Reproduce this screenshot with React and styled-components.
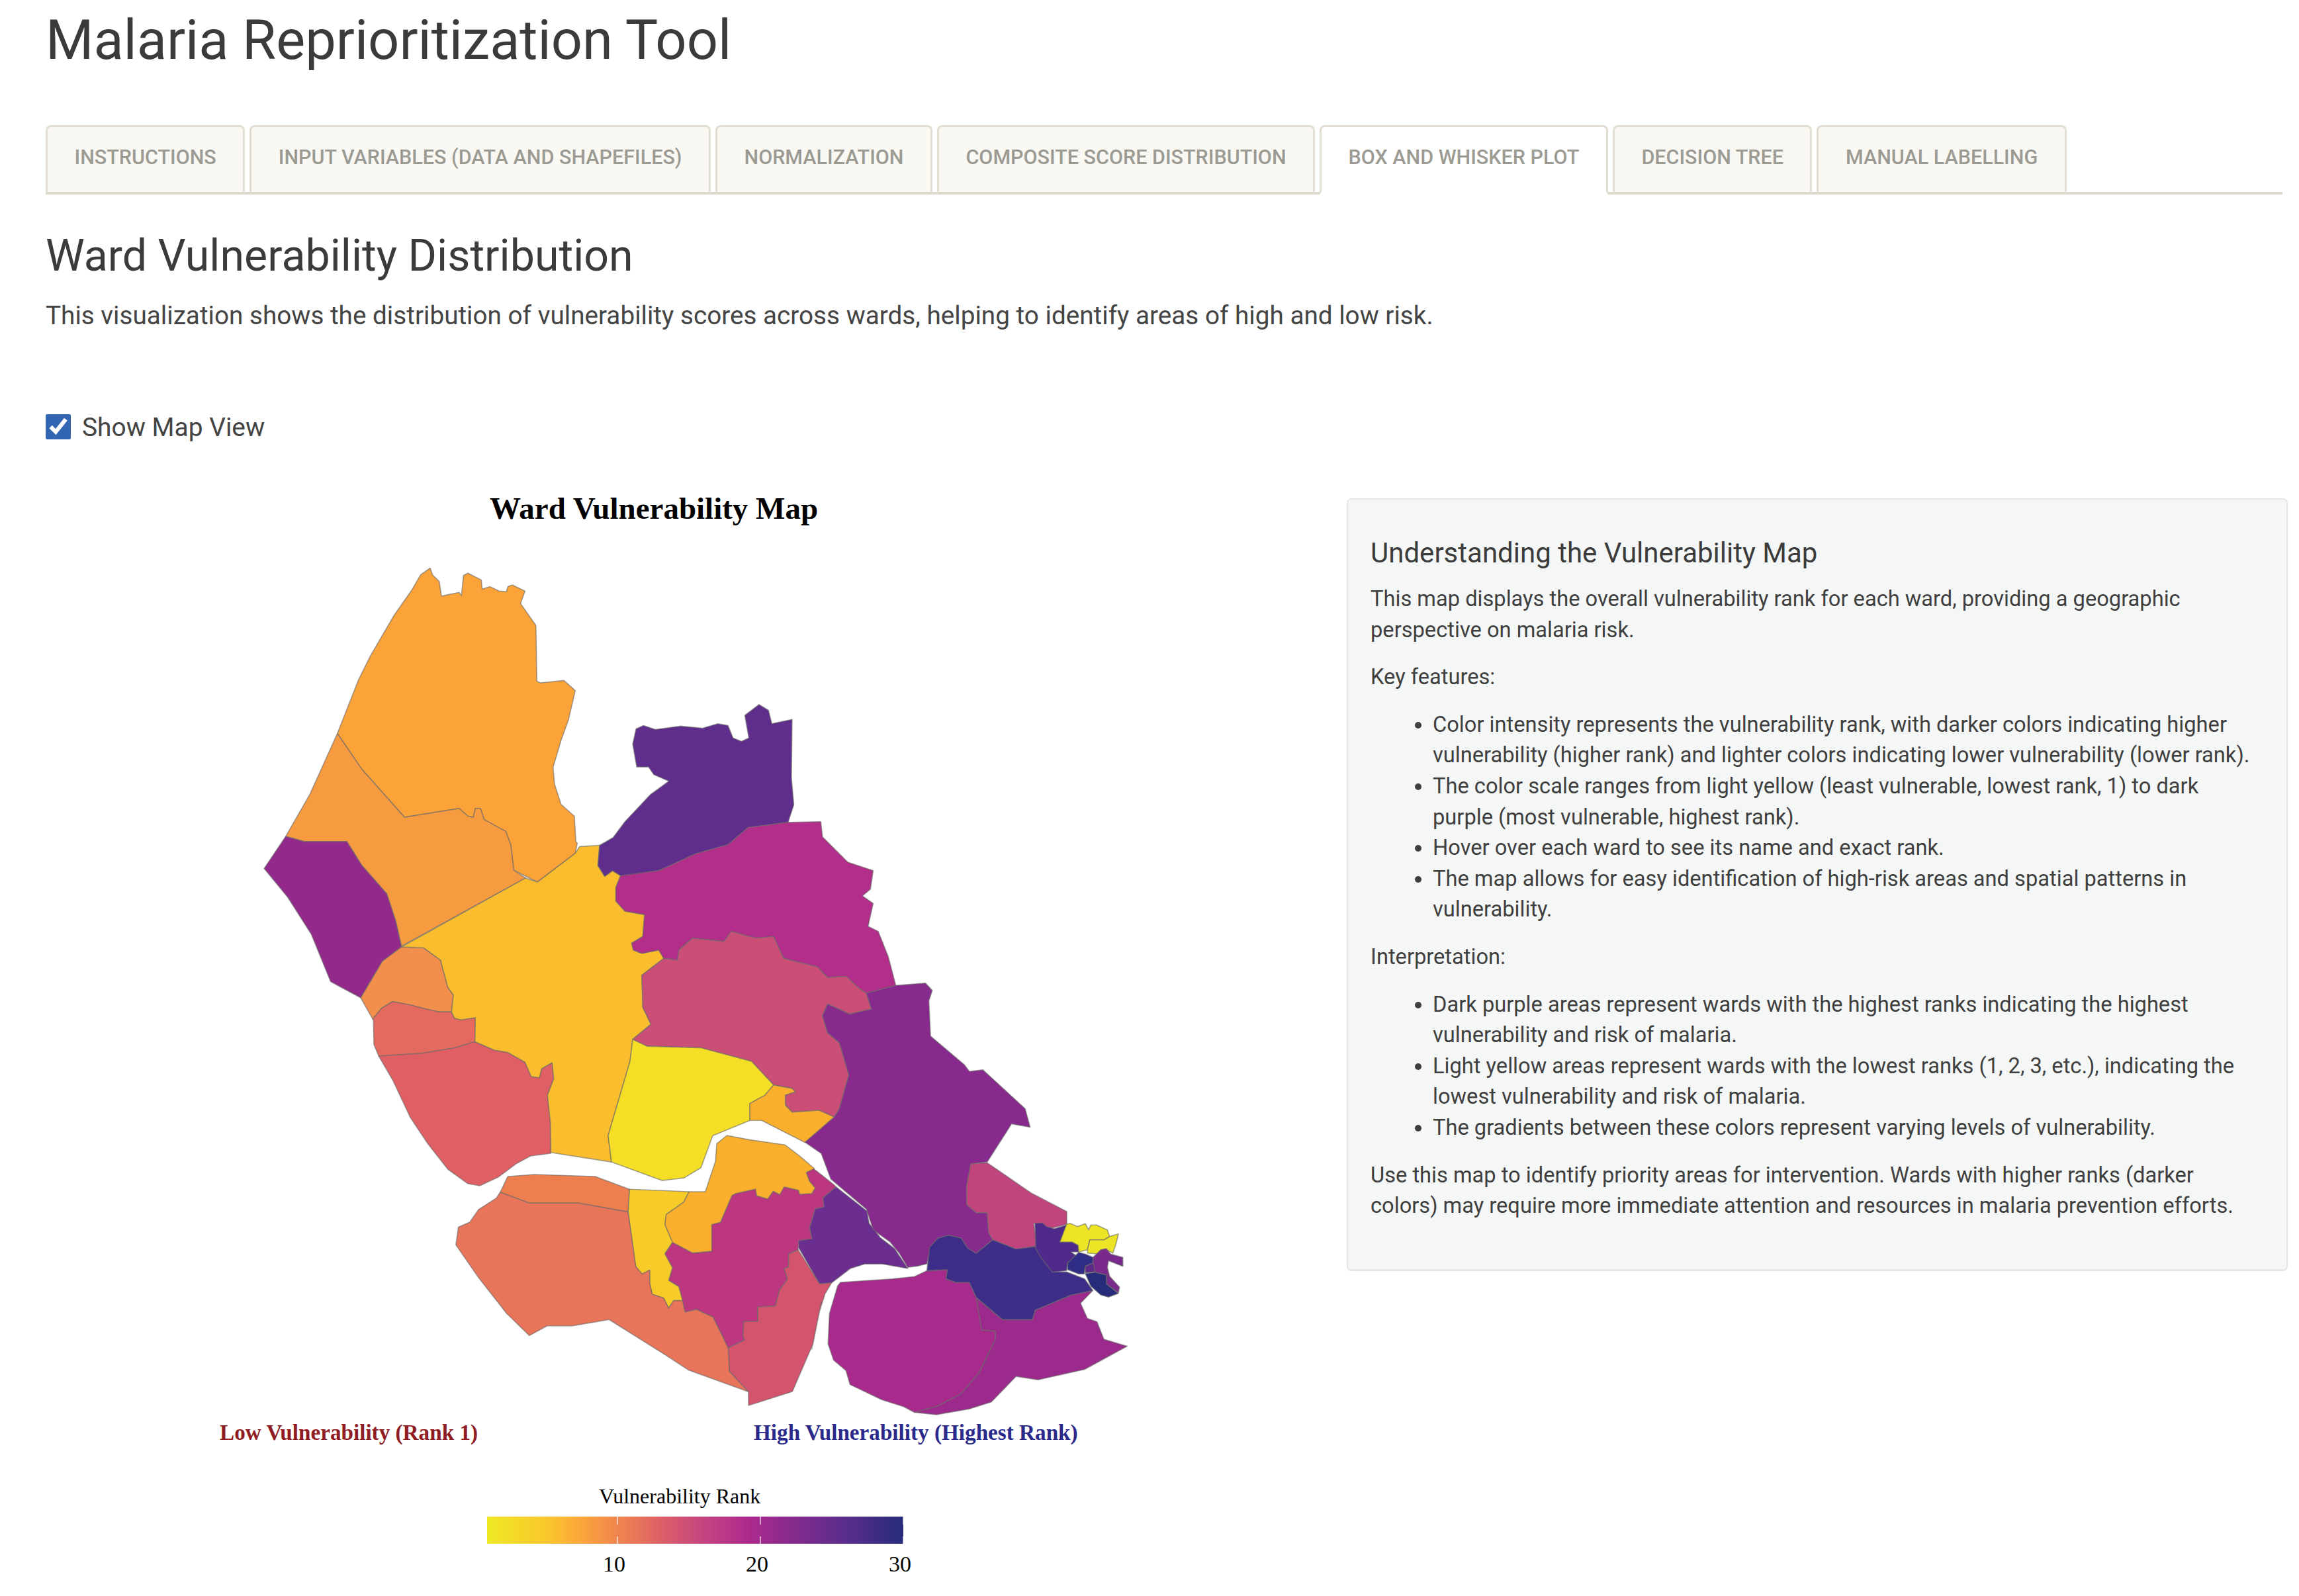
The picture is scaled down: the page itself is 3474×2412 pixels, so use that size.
import styled, { createGlobalStyle } from 'styled-components'

const GlobalStyle = createGlobalStyle`
  html, body {
    margin: 0;
    background: #fff;
  }
  body {
    font-family: Roboto, "Liberation Sans", sans-serif;
    color: #3d3d3d;
  }
`

const Page = styled.div`
  padding: 0 25px 0 69px;
  width: 3474px;
  height: 2412px;
  box-sizing: border-box;
  overflow: hidden;
`

const Title = styled.h1`
  margin: 0;
  padding-top: 13px;
  height: 189px;
  box-sizing: border-box;
  font-size: 83px;
  line-height: 96px;
  font-weight: 400;
  color: #3b3b3b;
`

const TabBar = styled.div`
  display: flex;
  gap: 7px;
  height: 105px;
  box-sizing: border-box;
  border-bottom: 4px solid #ddd8ce;
`

const Tab = styled.div`
  height: 105px;
  box-sizing: border-box;
  padding: 28px 40.5px 0;
  border: 3px solid #e2ded4;
  border-bottom: 4px solid ${props => (props.$active ? '#fff' : '#ddd8ce')};
  border-radius: 8px 8px 0 0;
  background: ${props => (props.$active ? '#fff' : '#faf8f3')};
  color: #9b9b94;
  font-size: 30.5px;
  line-height: 36px;
  font-weight: 500;
  text-transform: uppercase;
  white-space: nowrap;
`

const SectionTitle = styled.h2`
  margin: 54px 0 0;
  font-size: 66.3px;
  line-height: 76px;
  font-weight: 400;
  color: #3b3b3b;
`

const Lead = styled.p`
  margin: 30px 0 0;
  font-size: 38.7px;
  line-height: 46px;
  color: #444;
`

const CheckRow = styled.label`
  display: flex;
  align-items: center;
  gap: 17px;
  margin-top: 125px;
  height: 40px;
  font-size: 38.9px;
  color: #444;
`

const CheckBox = styled.input`
  width: 38px;
  height: 38px;
  margin: 0;
  accent-color: #3266b2;
`

const Columns = styled.div`
  display: flex;
  align-items: flex-start;
  margin: 88px -8px 0 0;
`

const MapColumn = styled.div`
  width: 1966px;
  flex: none;
  margin-top: -13px;
`

const ChartTitle = styled.div`
  width: 1838px;
  font-family: "Liberation Serif", serif;
  font-weight: 700;
  font-size: 47px;
  line-height: 56px;
  text-align: center;
  color: #000;
`

const MapSvg = styled.svg`
  display: block;
  width: 1350px;
  height: 1310px;
  margin: 36px 0 0 311px;
`

const EndLabels = styled.div`
  display: flex;
  font-family: "Liberation Serif", serif;
  font-weight: 700;
  font-size: 33.2px;
  line-height: 38px;
  margin-top: 4px;
`

const EndLabel = styled.div`
  margin-left: ${props => props.$left}px;
  width: ${props => props.$width}px;
  flex: none;
  white-space: nowrap;
  color: ${props => props.$color};
`

const Legend = styled.div`
  margin: 59px 0 0 667px;
  width: 629px;
  font-family: "Liberation Serif", serif;
  color: #000;
`

const LegendTitle = styled.div`
  padding-left: 169px;
  font-size: 32px;
  line-height: 36px;
  white-space: nowrap;
`

const ColorBar = styled.div`
  position: relative;
  margin-top: 13px;
  height: 41px;
  background: linear-gradient(90deg, #efe924 0%, #f9c82c 14%, #fba83a 22%, #ee7f52 33%, #dc5f68 42%, #c44480 52%, #ae2a8d 63%, #8b2a8d 72%, #5a2d8c 86%, #262c7a 100%);
`

const BarTick = styled.div`
  position: absolute;
  top: 0;
  bottom: 0;
  left: ${props => props.$at}px;
  width: 2px;
  background: linear-gradient(180deg, rgba(255, 255, 255, 0.55) 30%, transparent 30%, transparent 72%, rgba(255, 255, 255, 0.55) 72%);
`

const TickRow = styled.div`
  display: flex;
  margin: 12px 0 0 84px;
  font-size: 34px;
  line-height: 38px;
`

const TickLabel = styled.div`
  width: 216px;
  flex: none;
  text-align: center;
`

const InfoPanel = styled.div`
  width: 1422px;
  height: 1168px;
  flex: none;
  box-sizing: border-box;
  padding: 56px 34px 0;
  background: #f5f7f7;
  border: 2px solid #e6e8e8;
  border-bottom-width: 3px;
  border-radius: 7px;
  font-size: 32.65px;
  line-height: 46.6px;
  color: #3f3f3f;
`

const InfoTitle = styled.h4`
  margin: 0 0 21px;
  font-size: 42px;
  line-height: 50px;
  font-weight: 400;
  color: #3b3b3b;
`

const InfoText = styled.p`
  margin: 0 0 25px;
`

const InfoList = styled.ul`
  margin: 0 0 25px;
  padding-left: 94px;
`

const wards = [
  { fill: '#fba238', pts: [[3, [358,640, 430,480, 470,410, 550,290, 610,215, 640,170, 672,150, 680,170, 703,190, 710,233, 770,222, 778,232, 785,172, 800,165, 845,185, 848,212, 875,205, 905,218, 930,220, 935,205, 950,200, 993,218, 978,255, 1030,320, 1033,485, 1045,490, 1125,483, 1163,513, 1140,600, 1115,660, 1088,740, 1093,790, 1115,850, 1160,885, 1165,960, 1170,965, 1163,995, 1035,1080, 955,1045, 945,970, 928,930, 855,895, 842,862, 825,862, 818,888, 800,885, 770,862, 585,888, 440,745]]] },
  { fill: '#f79b41', pts: [[3, [358,640, 440,745, 585,888, 770,862, 800,885, 818,888, 825,862, 842,862, 855,895, 928,930, 945,970, 955,1045, 995,1068, 575,1270, 555,1195, 525,1115, 440,1030, 390,960, 245,960, 183,945, 265,820]]] },
  { fill: '#932a8b', pts: [[3, [110,1040, 183,945, 245,960, 390,960, 440,1030, 525,1115, 555,1195, 575,1272, 510,1315, 437,1423, 335,1375, 270,1235, 190,1125]]] },
  { fill: '#f28f4c', pts: [[3, [437,1423, 510,1315, 575,1272, 650,1275, 708,1312]], [10, [440,40, 470,150, 495,185, 487,262, 430,262, 375,250, 300,230, 220,215, 170,245, 130,295]]] },
  { fill: '#e4695e', pts: [[10, [130,295, 170,245, 220,215, 300,230, 375,250, 430,262, 487,262, 500,290, 530,298, 595,288, 593,397, 500,425, 350,450, 157,462, 135,410, 133,300]]] },
  { fill: '#e05f65', pts: [[10, [157,462, 350,450, 500,425, 593,397, 680,435, 740,445, 820,490, 848,555, 885,560, 895,520, 943,492, 950,565, 922,640, 935,765, 937,903, 845,915, 780,950, 700,1010, 615,1050, 560,1040, 470,975, 380,860, 300,740, 220,570]]] },
  { fill: '#f9bd2d', pts: [[3, [995,1068, 1035,1080, 1163,995, 1178,975]], [4, [110,540, 105,600, 125,632, 148,615, 172,630, 158,665, 158,705, 185,735, 243,745, 238,810, 205,830, 210,850, 235,860, 285,850, 300,875, 235,925, 238,1020, 262,1070, 208,1115, 200,1180, 135,1400, 145,1478]], [5, [555,365]], [10, [935,765, 922,640, 950,565, 943,492, 895,520, 885,560, 848,555, 820,490, 740,445, 680,435, 593,397, 595,288, 530,298, 500,290, 487,262, 495,185, 470,150, 440,40]], [3, [708,1312, 650,1275, 575,1272]]] },
  { fill: '#5f2d8c', pts: [[4, [110,540, 150,517, 185,470, 260,390, 315,350, 270,330, 255,308, 220,308, 208,240, 218,195, 240,185, 275,197, 350,187, 415,193, 460,180, 490,185, 505,222, 530,232, 552,222, 540,155, 582,123, 610,140, 620,180, 680,167, 678,340, 685,420, 668,472, 550,487, 490,538, 395,565, 285,615, 175,632, 148,615, 125,632, 105,600]]] },
  { fill: '#b32d8a', pts: [[4, [172,630, 285,615, 395,565, 490,538, 550,487, 668,472, 765,470, 770,515, 845,590, 920,615, 912,670, 888,690, 920,712, 905,780, 935,795, 965,870, 987,955, 900,978, 880,965, 840,928, 785,932, 755,900, 655,875, 625,810, 575,815, 545,808, 500,795, 478,825, 385,815, 345,850, 340,880, 300,875, 285,850, 235,860, 210,850, 205,830, 238,810, 243,745, 185,735, 158,705, 158,665]]] },
  { fill: '#cb4e76', pts: [[4, [300,875, 340,880, 345,850, 385,815, 478,825, 500,795, 545,808, 575,815, 625,810, 655,875, 755,900, 785,932, 840,928, 880,965, 900,978, 915,1025, 850,1040, 785,1010, 770,1045, 785,1095, 820,1125, 848,1220, 820,1320, 805,1345, 760,1325, 680,1330, 660,1310, 660,1280, 690,1270, 680,1260, 625,1250, 560,1180, 410,1140, 250,1135, 208,1115, 262,1070, 238,1020, 235,925]]] },
  { fill: '#f4de26', pts: [[4, [208,1115, 250,1135, 410,1140, 560,1180, 625,1250, 600,1280, 555,1305, 555,1355, 445,1400, 410,1495, 360,1525, 295,1533, 145,1478, 135,1400, 200,1180]]] },
  { fill: '#fbb02d', pts: [[4, [625,1250, 680,1260, 690,1270, 660,1280, 660,1310, 680,1330, 760,1325, 805,1345, 718,1420, 590,1355, 555,1355, 555,1305, 600,1280]]] },
  { fill: '#882a8d', pts: [[4, [900,978, 987,955, 1075,948, 1095,970, 1085,1000, 1090,1105, 1190,1190, 1205,1210, 1245,1205, 1370,1320, 1385,1375, 1330,1365, 1258,1478]], [6, [885,305, 870,400, 870,480, 905,515, 945,515, 950,600, 965,632, 905,690, 875,670, 850,625, 805,612, 765,625, 740,660, 725,735, 690,745, 655,750, 625,690, 590,640, 530,590, 505,500, 400,395, 375,370, 340,260, 285,215]], [4, [718,1420, 805,1345, 820,1320, 848,1220, 820,1125, 785,1095, 770,1045, 785,1010, 850,1040, 915,1025]]] },
  { fill: '#c1447e', pts: [[6, [945,300, 885,305, 870,400, 870,480, 905,515, 945,515, 950,600, 965,632, 1050,672, 1125,660, 1115,560, 1150,575, 1185,580, 1235,565, 1235,510, 1105,430]]] },
  { fill: '#6b2d90', pts: [[12, [490,95, 630,205, 640,260, 690,325, 755,375, 815,465, 700,445, 620,445, 555,465, 470,530, 415,535, 320,370, 320,338, 380,330, 370,280, 395,195, 435,185, 430,145]]] },
  { fill: '#bc3680', pts: [[12, [355,30, 385,10, 480,85, 490,95, 430,145, 435,185, 395,195, 370,280, 380,330, 320,338, 318,380, 275,400, 275,460, 255,465, 270,515, 235,560, 215,635, 135,640, 135,705, 72,705, 68,770, 75,790, 0,825]], [5, [1225,1075, 1195,1015, 1130,985, 1085,995, 1060,895, 1020,870, 1035,820, 1005,765, 1035,720, 1115,762, 1190,755, 1190,650, 1225,640, 1270,535]], [12, [35,125, 125,105, 130,135, 180,150, 205,115, 235,130, 255,95, 320,110, 325,128, 380,125, 395,100, 370,70]]] },
  { fill: '#d4546d', pts: [[12, [318,380, 415,535, 470,530, 440,580, 415,660, 380,830]], [6, [340,900, 310,1080, 235,1285, 75,1345]], [5, [1335,1310, 1260,1230, 1255,1138]], [12, [0,825, 75,790, 68,770, 72,705, 135,705, 135,640, 215,635, 235,560, 270,515, 255,465, 275,460, 275,400]]] },
  { fill: '#fbb02d', pts: [[5, [1100,520, 1165,520, 1205,400, 1210,330, 1250,298, 1340,315, 1480,335]], [6, [210,225, 260,270, 315,325]], [12, [355,30, 370,70, 395,100, 380,125, 325,128, 320,110, 255,95, 235,130, 205,115, 180,150, 130,135, 125,105, 35,125]], [5, [1270,535, 1225,640, 1190,650, 1190,755, 1115,762, 1035,720, 1005,650, 1010,610, 1080,560]]] },
  { fill: '#f7cc29', pts: [[5, [865,510, 1100,520, 1080,560, 1010,610, 1005,650, 1035,720, 1005,765, 1035,820, 1020,870, 1060,895, 1075,950, 1040,950, 1020,980, 1000,940, 955,925, 945,880, 945,830, 915,845, 890,815, 860,600]]] },
  { fill: '#ed7f4f', pts: [[5, [385,460, 490,452, 730,460, 865,510, 860,600, 665,565, 470,565, 355,522]]] },
  { fill: '#e8745a', pts: [[5, [355,522, 470,565, 665,565, 860,600, 890,815, 915,845, 945,830, 945,880, 955,925, 1000,940, 1020,980, 1040,950, 1075,950, 1085,995, 1130,985, 1195,1015, 1225,1075, 1255,1138, 1260,1230, 1335,1310, 1100,1225, 1000,1160, 785,1025, 640,1050, 540,1050, 470,1088, 380,1000, 270,860, 180,730, 190,660, 235,640, 270,590, 340,545]]] },
  { fill: '#a72a8c', pts: [[6, [410,815, 600,800, 680,790, 725,765, 800,760, 795,800, 830,815, 880,815, 905,880, 925,1020, 975,1025, 975,1060, 915,1205, 850,1295, 760,1350, 680,1375, 640,1350, 560,1320, 445,1255, 430,1195, 385,1150, 365,1080, 370,950, 400,830]]] },
  { fill: '#9c2a8c', pts: [[6, [905,880, 1000,975, 1110,975, 1120,935, 1250,870, 1330,850, 1285,905, 1310,970, 1345,985, 1370,1060, 1455,1090, 1300,1190, 1130,1235, 1050,1220, 960,1330, 880,1360, 760,1385, 680,1375, 760,1350, 850,1295, 915,1205, 975,1060, 975,1025, 925,1020]]] },
  { fill: '#3e2d88', pts: [[6, [725,765, 735,665, 765,625, 805,612, 850,625, 875,670, 905,690, 965,632, 1050,672, 1125,660, 1130,680, 1185,770, 1235,770, 1300,800, 1330,850, 1250,870, 1120,935, 1110,975, 1000,975, 905,880, 880,815, 830,815, 795,800, 800,760]]] },
  { fill: '#4f2a8a', pts: [[11, [72,140, 105,138, 125,155, 160,165, 215,148, 185,225, 240,225, 268,240, 270,270, 235,270, 262,290, 220,320, 215,355, 150,362, 95,290, 75,255]]] },
  { fill: '#ece424', pts: [[11, [215,145, 230,140, 265,155, 300,142, 315,170, 325,148, 350,148, 400,170, 410,200, 385,215, 320,215, 310,260, 270,270, 268,240, 240,225, 185,225]]] },
  { fill: '#ece424', pts: [[11, [320,215, 385,215, 410,200, 450,188, 440,230, 425,275, 405,265, 370,280, 310,275, 310,260]]] },
  { fill: '#2f2d85', pts: [[11, [270,272, 300,280, 335,295, 335,320, 300,335, 295,370, 270,370, 220,350, 220,320]]] },
  { fill: '#7a2a8c', pts: [[11, [370,260, 395,255, 415,280, 470,295, 470,335, 405,310, 400,340, 410,380, 455,430, 450,455, 395,415, 395,375, 340,360, 335,320, 335,295]]] },
  { fill: '#5e2a8a', pts: [[11, [300,335, 335,320, 345,360, 300,365]]] },
  { fill: '#262c7a', pts: [[11, [300,368, 345,362, 395,375, 395,415, 450,458, 405,475, 370,465, 325,425]]] }
]

// each list was read off a zoomed crop of the map, so it keeps that crop's origin and scale
const CROPS = {
  3: [350, 780, 2.24, 1.96],
  4: [850, 1000, 1.96, 1.96],
  5: [620, 1600, 2.613, 2.613],
  6: [1100, 1650, 2.412, 2.85],
  10: [520, 1440, 3, 3],
  11: [1540, 1800, 3, 3],
  12: [1100, 1760, 3, 3]
}

const toPoints = pts => pts.map(([crop, list]) => {
  const [x0, y0, sx, sy] = CROPS[crop]
  const out = []
  for (let i = 0; i < list.length; i += 2) {
    out.push(`${(x0 + list[i] / sx).toFixed(1)},${(y0 + list[i + 1] / sy).toFixed(1)}`)
  }
  return out.join(' ')
}).join(' ')

const TABS = [
  'Instructions',
  'Input Variables (Data and Shapefiles)',
  'Normalization',
  'Composite Score Distribution',
  'Box and Whisker Plot',
  'Decision Tree',
  'Manual Labelling'
]

function App() {
  return (
    <Page>
      <GlobalStyle />
      <Title>Malaria Reprioritization Tool</Title>
      <TabBar>
        {TABS.map(tab => (
          <Tab key={tab} $active={tab === 'Box and Whisker Plot'}>{tab}</Tab>
        ))}
      </TabBar>
      <SectionTitle>Ward Vulnerability Distribution</SectionTitle>
      <Lead>This visualization shows the distribution of vulnerability scores across wards, helping to identify areas of high and low risk.</Lead>
      <CheckRow>
        <CheckBox type="checkbox" defaultChecked />
        Show Map View
      </CheckRow>
      <Columns>
        <MapColumn>
          <ChartTitle>Ward Vulnerability Map</ChartTitle>
          <MapSvg viewBox="380 830 1350 1310">
            {wards.map((ward, i) => (
              <polygon
                key={i}
                points={toPoints(ward.pts)}
                fill={ward.fill}
                stroke="rgba(105, 105, 105, 0.6)"
                strokeWidth="1.6"
                strokeLinejoin="round"
              />
            ))}
          </MapSvg>
          <EndLabels>
            <EndLabel $left={263} $width={807} $color="#8f1c22">Low Vulnerability (Rank 1)</EndLabel>
            <EndLabel $left={0} $width={500} $color="#2b2a8a">High Vulnerability (Highest Rank)</EndLabel>
          </EndLabels>
          <Legend>
            <LegendTitle>Vulnerability Rank</LegendTitle>
            <ColorBar>
              <BarTick $at={196} />
              <BarTick $at={412} />
              <BarTick $at={628} />
            </ColorBar>
            <TickRow>
              <TickLabel>10</TickLabel>
              <TickLabel>20</TickLabel>
              <TickLabel>30</TickLabel>
            </TickRow>
          </Legend>
        </MapColumn>
        <InfoPanel>
          <InfoTitle>Understanding the Vulnerability Map</InfoTitle>
          <InfoText>This map displays the overall vulnerability rank for each ward, providing a geographic perspective on malaria risk.</InfoText>
          <InfoText>Key features:</InfoText>
          <InfoList>
            <li>Color intensity represents the vulnerability rank, with darker colors indicating higher vulnerability (higher rank) and lighter colors indicating lower vulnerability (lower rank).</li>
            <li>The color scale ranges from light yellow (least vulnerable, lowest rank, 1) to dark purple (most vulnerable, highest rank).</li>
            <li>Hover over each ward to see its name and exact rank.</li>
            <li>The map allows for easy identification of high-risk areas and spatial patterns in vulnerability.</li>
          </InfoList>
          <InfoText>Interpretation:</InfoText>
          <InfoList>
            <li>Dark purple areas represent wards with the highest ranks indicating the highest vulnerability and risk of malaria.</li>
            <li>Light yellow areas represent wards with the lowest ranks (1, 2, 3, etc.), indicating the lowest vulnerability and risk of malaria.</li>
            <li>The gradients between these colors represent varying levels of vulnerability.</li>
          </InfoList>
          <InfoText>Use this map to identify priority areas for intervention. Wards with higher ranks (darker colors) may require more immediate attention and resources in malaria prevention efforts.</InfoText>
        </InfoPanel>
      </Columns>
    </Page>
  )
}

export default App
